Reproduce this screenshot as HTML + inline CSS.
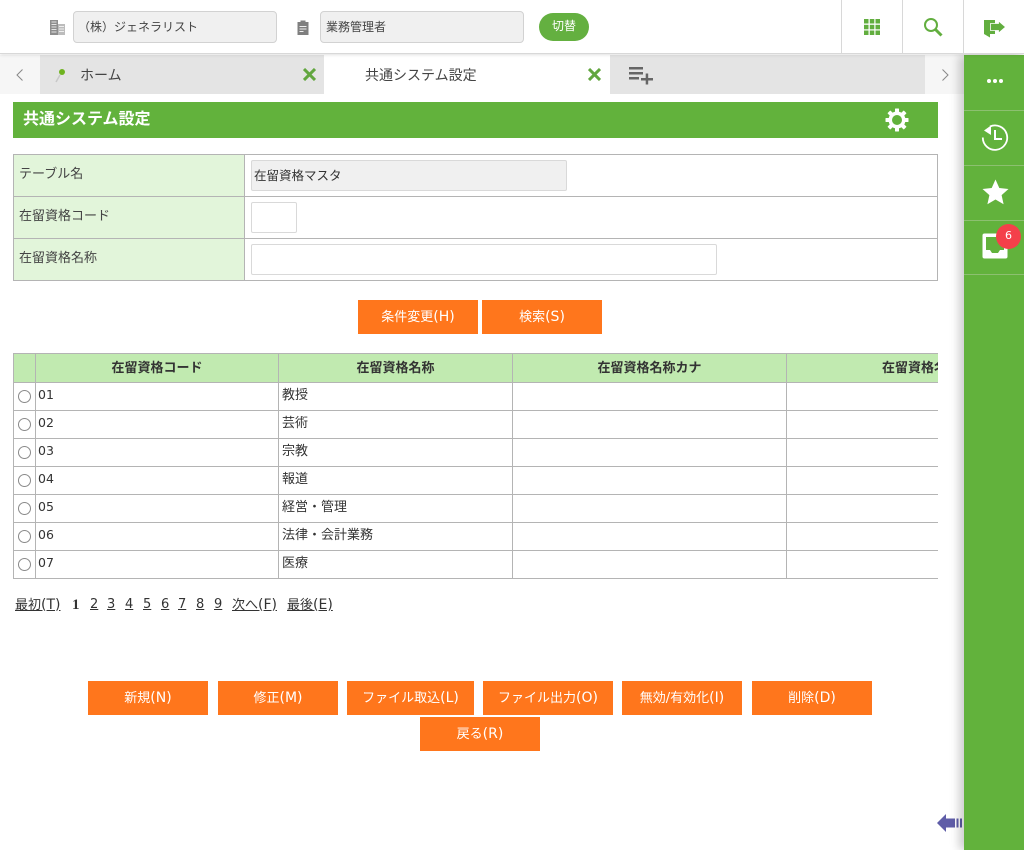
<!DOCTYPE html>
<html lang="ja"><head><meta charset="utf-8"><title>共通システム設定</title>
<style>
*{box-sizing:border-box}
html,body{margin:0;padding:0;width:1024px;height:850px;overflow:hidden;background:#fff}
body{position:relative;font-family:"DejaVu Sans","Noto Sans CJK JP",sans-serif;font-size:13px;color:#333}
.a{position:absolute}
.t{position:absolute;white-space:nowrap;line-height:18px}
.l{font-size:14px}
.btn{position:absolute;width:120px;height:34px;background:#ff761c;color:#fff;text-align:center;line-height:34px;font-size:13px}
.hl{position:absolute;background:#b4b4b4;height:1px}
.vl{position:absolute;background:#b4b4b4;width:1px}
.inp{position:absolute;border:1px solid #d9d9d9;border-radius:2px;background:#fff}
.radio{position:absolute;left:18px;width:13px;height:13px;border:1px solid #8a8a8a;border-radius:50%;background:#fff}
.pg{position:absolute;top:596px;line-height:18px;text-decoration:underline;white-space:nowrap}
.side{position:absolute;left:964px;width:60px;height:1px;background:#8cc070}
</style></head><body>

<!-- header -->
<div class="a" style="left:0;top:0;width:1024px;height:54px;background:#fff;border-bottom:1px solid #d8d8d8;box-shadow:0 1px 3px rgba(0,0,0,.12);z-index:3"></div>
<div style="position:absolute;left:0;top:0;width:1024px;height:55px;z-index:4">
<svg class="a" style="left:49px;top:19px" width="17" height="17" viewBox="0 0 17 17"><rect x="1" y="1" width="8" height="15" fill="#8e8e8e"/><rect x="9" y="5" width="7" height="11" fill="#bcbcbc"/><path d="M2.500 3h5M2.500 5.500h5M2.500 8h5M2.500 10.500h5M2.500 13h5" stroke="#e4e4e4"/><path d="M10 7.500h5M10 10h5M10 12.500h5" stroke="#eee"/></svg>
<div class="a" style="left:73px;top:11px;width:204px;height:32px;background:#f0f0f0;border:1px solid #d2d2d2;border-radius:4px"></div>
<div class="t" style="left:78px;top:18px;color:#444;font-size:12px">（株）ジェネラリスト</div>
<svg class="a" style="left:296px;top:19px" width="14" height="17" viewBox="0 0 14 17"><path d="M1.500 3h3V1.500h5V3h3v13h-11z" fill="#7f7f7f"/><path d="M3.500 7.500h7M3.500 10h7M3.500 12.500h4" stroke="#eee"/></svg>
<div class="a" style="left:320px;top:11px;width:204px;height:32px;background:#f0f0f0;border:1px solid #d2d2d2;border-radius:4px"></div>
<div class="t" style="left:326px;top:18px;color:#444;font-size:12px">業務管理者</div>
<div class="a" style="left:539px;top:13px;width:50px;height:28px;border-radius:14px;background:#64b040;color:#fff;text-align:center;line-height:27px;font-size:12px">切替</div>
<div class="a" style="left:841px;top:0;width:1px;height:54px;background:#d8d8d8"></div>
<div class="a" style="left:902px;top:0;width:1px;height:54px;background:#d8d8d8"></div>
<div class="a" style="left:963px;top:0;width:1px;height:54px;background:#d8d8d8"></div>
<svg class="a" style="left:864px;top:19px" width="16" height="16" viewBox="0 0 16 16" fill="#62ae3f"><rect x="0" y="0" width="4.500" height="4.500"/><rect x="5.800" y="0" width="4.500" height="4.500"/><rect x="11.500" y="0" width="4.500" height="4.500"/><rect x="0" y="5.800" width="4.500" height="4.500"/><rect x="5.800" y="5.800" width="4.500" height="4.500"/><rect x="11.500" y="5.800" width="4.500" height="4.500"/><rect x="0" y="11.500" width="4.500" height="4.500"/><rect x="5.800" y="11.500" width="4.500" height="4.500"/><rect x="11.500" y="11.500" width="4.500" height="4.500"/></svg>
<svg class="a" style="left:923px;top:17px" width="20" height="20" viewBox="0 0 20 20" fill="none" stroke="#62ae3f"><circle cx="8" cy="8" r="6" stroke-width="2"/><path d="M12.500 12.500L18.500 18.500" stroke-width="3"/></svg>
<svg class="a" style="left:984px;top:19px" width="22" height="19" viewBox="0 0 22 19"><path d="M0 1h11v14H6v3.500L0 15z" fill="#62ae3f"/><path d="M6.500 4.500h8V2l7 6-7 6v-2.500h-8z" fill="#62ae3f" stroke="#fff" stroke-width=".8"/></svg>
</div>

<!-- tabs -->
<div class="a" style="left:0;top:55px;width:964px;height:39px;background:#f6f6f6"></div>
<div class="a" style="left:40px;top:55px;width:284px;height:39px;background:#e4e4e4"></div>
<div class="a" style="left:324px;top:55px;width:286px;height:39px;background:#fff"></div>
<div class="a" style="left:610px;top:55px;width:315px;height:39px;background:#e4e4e4"></div>
<svg class="a" style="left:15px;top:68px" width="10" height="14" viewBox="0 0 10 14" fill="none" stroke="#888" stroke-width="1"><path d="M7.500 1.500L2 7l5.500 5.500"/></svg>
<svg class="a" style="left:940px;top:68px" width="10" height="14" viewBox="0 0 10 14" fill="none" stroke="#888" stroke-width="1"><path d="M2.500 1.500L8 7l-5.500 5.500"/></svg>
<svg class="a" style="left:54px;top:67px" width="14" height="16" viewBox="0 0 14 16"><path d="M6 8L2 15" stroke="#c8c8c8" stroke-width="1.500"/><circle cx="8" cy="5" r="3" fill="#6fb320"/></svg>
<div class="t" style="left:80px;top:67px;font-size:14px;color:#444">ホーム</div>
<svg class="a" style="left:303px;top:68px" width="13" height="13" viewBox="0 0 13 13" stroke="#62a63f" stroke-width="3"><path d="M1 1l11 11M12 1L1 12"/></svg>
<div class="t" style="left:365px;top:67px;font-size:14px;color:#444">共通システム設定</div>
<svg class="a" style="left:588px;top:68px" width="13" height="13" viewBox="0 0 13 13" stroke="#62a63f" stroke-width="3"><path d="M1 1l11 11M12 1L1 12"/></svg>
<svg class="a" style="left:629px;top:66px" width="24" height="19" viewBox="0 0 24 19" fill="#666"><rect x="0" y="1" width="14" height="2.500"/><rect x="0" y="6" width="14" height="2.500"/><rect x="0" y="11" width="10" height="2.500"/><rect x="12" y="12" width="12" height="2.500"/><rect x="16.700" y="7.500" width="2.500" height="11"/></svg>

<!-- title bar -->
<div class="a" style="left:13px;top:102px;width:925px;height:36px;background:#62b23c"></div>
<div class="t" style="left:23px;top:110px;color:#fff;font-weight:bold;font-size:16px">共通システム設定</div>
<svg class="a" style="left:885px;top:108px" width="24" height="24" viewBox="0 0 24 24"><g fill="#fff"><circle cx="12" cy="12" r="8.500"/><rect x="10" y="0.500" width="4" height="23" rx=".5"/><rect x="10" y="0.500" width="4" height="23" rx=".5" transform="rotate(45 12 12)"/><rect x="10" y="0.500" width="4" height="23" rx=".5" transform="rotate(90 12 12)"/><rect x="10" y="0.500" width="4" height="23" rx=".5" transform="rotate(135 12 12)"/></g><circle cx="12" cy="12" r="5" fill="#62b23c"/></svg>

<!-- form -->
<div class="a" style="left:13px;top:154px;width:925px;height:127px;border:1px solid #b4b4b4;background:#fff"></div>
<div class="a" style="left:14px;top:155px;width:230px;height:125px;background:#e2f5da"></div>
<div class="hl" style="left:14px;top:196px;width:923px"></div>
<div class="hl" style="left:14px;top:238px;width:923px"></div>
<div class="vl" style="left:244px;top:155px;height:125px"></div>
<div class="t" style="left:19px;top:166px;color:#444">テーブル名</div>
<div class="t" style="left:19px;top:208px;color:#444">在留資格コード</div>
<div class="t" style="left:19px;top:250px;color:#444">在留資格名称</div>
<div class="inp" style="left:251px;top:160px;width:316px;height:31px;background:#f0f0f0"></div>
<div class="t" style="left:254px;top:167px;color:#333;font-size:12.500px">在留資格マスタ</div>
<div class="inp" style="left:251px;top:202px;width:46px;height:31px"></div>
<div class="inp" style="left:251px;top:244px;width:466px;height:31px"></div>

<div class="btn" style="left:358px;top:300px">条件変更<span class="l">(H)</span></div>
<div class="btn" style="left:482px;top:300px">検索<span class="l">(S)</span></div>

<!-- table -->
<div class="a" style="left:13px;top:353px;width:925px;height:30px;background:#c1eab0"></div>
<div class="hl" style="left:13px;top:353px;width:925px"></div>
<div class="hl" style="left:13px;top:382px;width:925px"></div>
<div class="hl" style="left:13px;top:410px;width:925px"></div>
<div class="hl" style="left:13px;top:438px;width:925px"></div>
<div class="hl" style="left:13px;top:466px;width:925px"></div>
<div class="hl" style="left:13px;top:494px;width:925px"></div>
<div class="hl" style="left:13px;top:522px;width:925px"></div>
<div class="hl" style="left:13px;top:550px;width:925px"></div>
<div class="hl" style="left:13px;top:578px;width:925px"></div>
<div class="vl" style="left:13px;top:353px;height:226px"></div>
<div class="vl" style="left:35px;top:353px;height:226px"></div>
<div class="vl" style="left:278px;top:353px;height:226px"></div>
<div class="vl" style="left:512px;top:353px;height:226px"></div>
<div class="vl" style="left:786px;top:353px;height:226px"></div>
<div class="t" style="left:36px;top:360px;width:242px;text-align:center;font-weight:bold;font-size:13px;color:#333">在留資格コード</div>
<div class="t" style="left:279px;top:360px;width:233px;text-align:center;font-weight:bold;font-size:13px;color:#333">在留資格名称</div>
<div class="t" style="left:513px;top:360px;width:273px;text-align:center;font-weight:bold;font-size:13px;color:#333">在留資格名称カナ</div>
<div class="a" style="left:787px;top:354px;width:151px;height:28px;overflow:hidden"><div class="t" style="left:95px;top:6px;font-weight:bold;font-size:13px;color:#333">在留資格名称英字</div></div>

<div class="radio" style="top:390px"></div><div class="radio" style="top:418px"></div><div class="radio" style="top:446px"></div><div class="radio" style="top:474px"></div><div class="radio" style="top:502px"></div><div class="radio" style="top:530px"></div><div class="radio" style="top:558px"></div>
<div class="t" style="left:38px;top:386px;font-size:12.500px">01</div><div class="t" style="left:282px;top:386px;margin-top:1px">教授</div>
<div class="t" style="left:38px;top:414px;font-size:12.500px">02</div><div class="t" style="left:282px;top:414px;margin-top:1px">芸術</div>
<div class="t" style="left:38px;top:442px;font-size:12.500px">03</div><div class="t" style="left:282px;top:442px;margin-top:1px">宗教</div>
<div class="t" style="left:38px;top:470px;font-size:12.500px">04</div><div class="t" style="left:282px;top:470px;margin-top:1px">報道</div>
<div class="t" style="left:38px;top:498px;font-size:12.500px">05</div><div class="t" style="left:282px;top:498px;margin-top:1px">経営・管理</div>
<div class="t" style="left:38px;top:526px;font-size:12.500px">06</div><div class="t" style="left:282px;top:526px;margin-top:1px">法律・会計業務</div>
<div class="t" style="left:38px;top:554px;font-size:12.500px">07</div><div class="t" style="left:282px;top:554px;margin-top:1px">医療</div>

<!-- pager -->
<div class="pg" style="left:15px">最初<span class="l">(T)</span></div>
<div class="pg" style="left:72px;font-family:'Liberation Serif',serif;font-weight:bold;text-decoration:none;font-size:15px">1</div>
<div class="pg" style="left:90px">2</div><div class="pg" style="left:107px">3</div><div class="pg" style="left:125px">4</div><div class="pg" style="left:143px">5</div><div class="pg" style="left:161px">6</div><div class="pg" style="left:178px">7</div><div class="pg" style="left:196px">8</div><div class="pg" style="left:214px">9</div>
<div class="pg" style="left:232px">次へ<span class="l">(F)</span></div>
<div class="pg" style="left:287px">最後<span class="l">(E)</span></div>

<!-- bottom buttons -->
<div class="btn" style="left:88px;top:681px">新規<span class="l">(N)</span></div>
<div class="btn" style="left:218px;top:681px">修正<span class="l">(M)</span></div>
<div class="btn" style="left:347px;top:681px;width:127px">ファイル取込<span class="l">(L)</span></div>
<div class="btn" style="left:483px;top:681px;width:130px">ファイル出力<span class="l">(O)</span></div>
<div class="btn" style="left:622px;top:681px">無効/有効化<span class="l">(I)</span></div>
<div class="btn" style="left:752px;top:681px">削除<span class="l">(D)</span></div>
<div class="btn" style="left:420px;top:717px">戻る<span class="l">(R)</span></div>

<!-- arrow -->
<svg class="a" style="left:937px;top:812px" width="27" height="22" viewBox="0 0 27 22" fill="#5f5da8"><path d="M0 11l9-9v4.500h9v9h-9V20z"/><rect x="19.500" y="6.500" width="2" height="9"/><rect x="23" y="6.500" width="2" height="9"/></svg>

<!-- side panel -->
<div class="a" style="left:964px;top:55px;width:60px;height:795px;background:#62b23c;box-shadow:-5px 0 9px rgba(0,0,0,.2);z-index:2"></div>
<div style="position:absolute;left:0;top:0;width:1024px;height:850px;z-index:2;pointer-events:none">
<div class="side" style="top:110px"></div><div class="side" style="top:165px"></div><div class="side" style="top:220px"></div><div class="side" style="top:274px"></div>
<svg class="a" style="left:986px;top:77px" width="18" height="8" viewBox="0 0 18 8" fill="#fff"><circle cx="3" cy="4" r="2"/><circle cx="9" cy="4" r="2"/><circle cx="15" cy="4" r="2"/></svg>
<svg class="a" style="left:980px;top:123px" width="30" height="30" viewBox="0 0 30 30" fill="none" stroke="#fff" stroke-width="1.800"><path d="M10 3.500A12.200 12.200 0 1 1 2.800 14.500"/><path d="M15 7v9h7" stroke-width="2"/><path d="M4 7.500L11 2.500V12z" fill="#fff" stroke="none"/></svg>
<svg class="a" style="left:982px;top:179px" width="27" height="26" viewBox="0 0 27 26" fill="#fff"><path d="M13.500 0.500l3.800 8.500 9.200 1-6.900 6.100 2 9.100-8.100-4.700-8.100 4.700 2-9.100L.5 10l9.200-1z"/></svg>
<svg class="a" style="left:982px;top:233px" width="26" height="26" viewBox="0 0 26 26"><rect x="0.500" y="0.500" width="25" height="25" rx="2" fill="#fff"/><path d="M4 4h18v13h-4l-2 3h-6l-2-3H4z" fill="#62b23c"/></svg>
<div class="a" style="left:996px;top:224px;width:25px;height:25px;border-radius:50%;background:#f4404a;color:#fff;text-align:center;line-height:24px;font-size:11px">6</div>
</div>
</body></html>
